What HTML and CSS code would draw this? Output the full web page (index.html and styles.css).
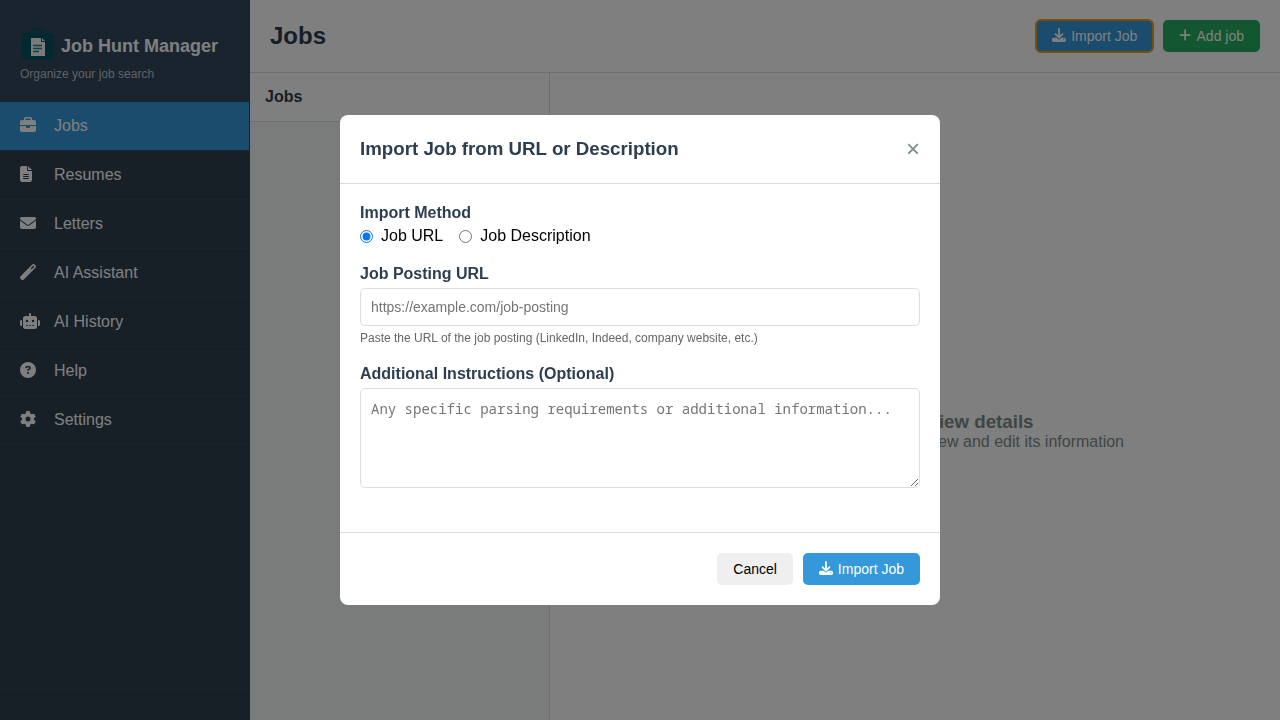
FILE: index.html
```html
<!DOCTYPE html>
<html lang="en">
<head>
<meta charset="utf-8">
<title>Job Hunt Manager</title>
<link rel="stylesheet" href="styles.css">
</head>
<body>
<svg class="sprite" aria-hidden="true">
  <symbol id="download" viewBox="0 0 512 512"><path d="M288 32c0-17.700-14.300-32-32-32s-32 14.300-32 32V274.700l-73.400-73.400c-12.500-12.500-32.800-12.500-45.300 0s-12.500 32.800 0 45.300l128 128c12.500 12.500 32.800 12.500 45.300 0l128-128c12.500-12.500 12.500-32.800 0-45.300s-32.800-12.500-45.300 0L288 274.700V32zM64 352c-35.300 0-64 28.700-64 64v32c0 35.300 28.700 64 64 64H448c35.300 0 64-28.700 64-64V416c0-35.300-28.700-64-64-64H346.500l-45.300 45.300c-25 25-65.500 25-90.500 0L165.500 352H64zm368 56a24 24 0 1 1 0 48 24 24 0 1 1 0-48z"/></symbol>
  <symbol id="briefcase" viewBox="0 0 512 512"><path d="M184 48H328c4.400 0 8 3.600 8 8V96H176V56c0-4.400 3.600-8 8-8zm-56 8V96H64C28.700 96 0 124.700 0 160v96H192 320 512V160c0-35.300-28.700-64-64-64H384V56c0-30.900-25.100-56-56-56H184c-30.900 0-56 25.100-56 56zM512 288H320v32c0 17.700-14.300 32-32 32H224c-17.700 0-32-14.300-32-32V288H0V416c0 35.300 28.700 64 64 64H448c35.300 0 64-28.700 64-64V288z"/></symbol>
</svg>
<div class="app">
  <aside class="sidebar">
    <header class="brand">
      <div class="brand-row">
        <svg class="logo" viewBox="0 0 36 36" aria-hidden="true">
          <path d="M12 7V4.500Q12 2 14 2H22Q24 2 24 4.500V7" fill="none" stroke="#005363" stroke-width="2"/>
          <path d="M5 6H31Q34 6 34 10V15Q34 18 36 19Q34 20 34 23V29Q34 33 30 33H6Q2 33 2 29V23Q2 20 0 19Q2 18 2 15V10Q2 6 5 6Z" fill="#005363"/>
          <path d="M9 8.500H7Q5 8.500 5 11V28Q5 30 7 30H9M27 8.500L31 12V28Q31 30 29 30H27" fill="none" stroke="#23485a" stroke-width="1"/>
          <path d="M11 11H21L25 15V29H11Z" fill="#f5f7f7"/>
          <path d="M21 10V15H26Z" fill="#005363"/><path d="M22 11V14H25Z" fill="#f5f7f7"/>
          <path d="M13 18.500H22M13 21.500H22M13 24.500H19" stroke="#168b94" stroke-width="1.500"/>
        </svg>
        <h1>Job Hunt Manager</h1>
      </div>
      <p>Organize your job search</p>
    </header>
    <nav class="nav">
      <a class="nav-item active" href="#"><span class="nav-icon"><svg viewBox="0 0 512 512"><use href="#briefcase"/></svg></span>Jobs</a>
      <a class="nav-item" href="#"><span class="nav-icon"><svg viewBox="0 0 384 512"><path d="M64 0C28.700 0 0 28.700 0 64V448c0 35.300 28.700 64 64 64H320c35.300 0 64-28.700 64-64V160H256c-17.700 0-32-14.300-32-32V0H64zM256 0V128H384L256 0zM112 256H272c8.800 0 16 7.200 16 16s-7.200 16-16 16H112c-8.800 0-16-7.200-16-16s7.200-16 16-16zm0 64H272c8.800 0 16 7.200 16 16s-7.200 16-16 16H112c-8.800 0-16-7.200-16-16s7.200-16 16-16zm0 64H272c8.800 0 16 7.200 16 16s-7.200 16-16 16H112c-8.800 0-16-7.200-16-16s7.200-16 16-16z"/></svg></span>Resumes</a>
      <a class="nav-item" href="#"><span class="nav-icon"><svg viewBox="0 0 512 512"><path d="M48 64C21.500 64 0 85.500 0 112c0 15.100 7.100 29.300 19.200 38.400L236.800 313.600c11.400 8.500 27 8.500 38.400 0L492.800 150.400c12.100-9.100 19.200-23.300 19.200-38.400c0-26.500-21.500-48-48-48H48zM0 176V384c0 35.300 28.700 64 64 64H448c35.300 0 64-28.700 64-64V176L294.400 339.200c-22.800 17.100-54 17.100-76.800 0L0 176z"/></svg></span>Letters</a>
      <a class="nav-item" href="#"><span class="nav-icon"><svg viewBox="0 0 16 16"><path fill-rule="evenodd" d="M.600 12.200L12.200.600Q13.500-.500 14.800.600L15.400 1.200Q16.500 2.500 15.400 3.800L3.800 15.400Q2.500 16.500 1.200 15.400L.600 14.800Q-.500 13.500.600 12.200ZM10.600 4.400L11.600 5.400L14.500 2.500L13.500 1.500Z"/></svg></span>AI Assistant</a>
      <a class="nav-item" href="#"><span class="nav-icon"><svg viewBox="0 0 640 512"><path d="M320 0c17.700 0 32 14.300 32 32V96H472c39.800 0 72 32.200 72 72V440c0 39.800-32.200 72-72 72H168c-39.800 0-72-32.200-72-72V168c0-39.800 32.200-72 72-72H288V32c0-17.700 14.300-32 32-32zM208 384c-8.800 0-16 7.200-16 16s7.200 16 16 16h32c8.800 0 16-7.200 16-16s-7.200-16-16-16H208zm96 0c-8.800 0-16 7.200-16 16s7.200 16 16 16h32c8.800 0 16-7.200 16-16s-7.200-16-16-16H304zm96 0c-8.800 0-16 7.200-16 16s7.200 16 16 16h32c8.800 0 16-7.200 16-16s-7.200-16-16-16H400zM264 256a40 40 0 1 0 -80 0 40 40 0 1 0 80 0zm152 40a40 40 0 1 0 0-80 40 40 0 1 0 0 80zM48 224H64V416H48c-26.500 0-48-21.500-48-48V272c0-26.500 21.500-48 48-48zm544 0c26.500 0 48 21.500 48 48v96c0 26.500-21.500 48-48 48H576V224h16z"/></svg></span>AI History</a>
      <a class="nav-item" href="#"><span class="nav-icon"><svg viewBox="0 0 512 512"><path d="M256 512A256 256 0 1 0 256 0a256 256 0 1 0 0 512zM169.800 165.300c7.900-22.300 29.100-37.300 52.800-37.300h58.300c34.900 0 63.100 28.300 63.100 63.100c0 22.600-12.100 43.500-31.700 54.800L280 264.400c-.2 13-10.900 23.600-24 23.600c-13.300 0-24-10.700-24-24V250.500c0-8.600 4.600-16.500 12.100-20.800l44.300-25.400c4.700-2.700 7.600-7.700 7.600-13.100c0-8.400-6.800-15.100-15.100-15.100H222.600c-3.400 0-6.400 2.100-7.500 5.300l-.4 1.200c-4.400 12.500-18.200 19-30.600 14.600s-19-18.200-14.600-30.600l.4-1.200zM224 352a32 32 0 1 1 64 0 32 32 0 1 1 -64 0z"/></svg></span>Help</a>
      <a class="nav-item" href="#"><span class="nav-icon"><svg viewBox="0 0 512 512"><path d="M495.900 166.600c3.200 8.700 .5 18.400-6.400 24.600l-43.300 39.400c1.100 8.300 1.700 16.800 1.700 25.400s-.6 17.100-1.700 25.400l43.300 39.400c6.900 6.200 9.600 15.900 6.400 24.600c-4.400 11.900-9.700 23.300-15.800 34.300l-4.700 8.100c-6.600 11-14 21.400-22.100 31.200c-5.900 7.200-15.700 9.600-24.500 6.800l-55.700-17.700c-13.400 10.300-28.200 18.900-44 25.400l-12.500 57.100c-2 9.100-9 16.300-18.200 17.800c-13.800 2.300-28 3.500-42.500 3.500s-28.700-1.200-42.500-3.500c-9.200-1.500-16.200-8.700-18.200-17.800l-12.500-57.100c-15.800-6.500-30.600-15.100-44-25.400L83.100 425.900c-8.800 2.800-18.600 .3-24.500-6.800c-8.100-9.800-15.500-20.200-22.100-31.200l-4.700-8.100c-6.100-11-11.400-22.400-15.800-34.300c-3.200-8.700-.5-18.400 6.400-24.600l43.300-39.400C64.600 273.100 64 264.600 64 256s.6-17.100 1.700-25.400L22.400 191.200c-6.900-6.200-9.600-15.900-6.400-24.600c4.400-11.900 9.700-23.300 15.800-34.300l4.700-8.100c6.600-11 14-21.400 22.100-31.200c5.900-7.200 15.700-9.600 24.500-6.800l55.700 17.700c13.400-10.300 28.200-18.900 44-25.400l12.500-57.100c2-9.100 9-16.300 18.200-17.800C227.300 1.200 241.500 0 256 0s28.700 1.200 42.500 3.500c9.200 1.500 16.200 8.700 18.200 17.800l12.500 57.100c15.800 6.500 30.600 15.100 44 25.400l55.700-17.700c8.800-2.800 18.600-.3 24.500 6.800c8.100 9.800 15.500 20.200 22.100 31.200l4.700 8.100c6.100 11 11.400 22.400 15.800 34.300zM256 336a80 80 0 1 0 0-160 80 80 0 1 0 0 160z"/></svg></span>Settings</a>
    </nav>
    <footer class="sidebar-footer"></footer>
  </aside>
  <main class="main">
    <header class="topbar">
      <h2>Jobs</h2>
      <div class="actions">
        <button class="btn btn-primary highlighted" type="button"><svg viewBox="0 0 512 512"><use href="#download"/></svg>Import Job</button>
        <button class="btn btn-success" type="button"><svg viewBox="0 0 448 512"><path d="M256 80c0-17.700-14.300-32-32-32s-32 14.300-32 32V224H48c-17.700 0-32 14.300-32 32s14.300 32 32 32H192V432c0 17.700 14.300 32 32 32s32-14.300 32-32V288H400c17.700 0 32-14.300 32-32s-14.300-32-32-32H256V80z"/></svg>Add job</button>
      </div>
    </header>
    <div class="content">
      <section class="list">
        <h3>Jobs</h3>
      </section>
      <section class="detail">
        <svg viewBox="0 0 512 512" aria-hidden="true"><use href="#briefcase"/></svg>
        <h3>Select a job to view details</h3>
        <p>Choose any job from the list to view and edit its information</p>
      </section>
    </div>
  </main>
</div>
<div class="overlay">
  <form class="modal" role="dialog" aria-labelledby="modal-title">
    <header class="modal-header">
      <h3 id="modal-title">Import Job from URL or Description</h3>
      <button class="close" type="button" aria-label="Close">×</button>
    </header>
    <div class="modal-body">
      <fieldset class="group">
        <legend class="label">Import Method</legend>
        <div class="radios">
          <label><input type="radio" name="method" checked>Job URL</label>
          <label><input type="radio" name="method">Job Description</label>
        </div>
      </fieldset>
      <div class="group">
        <label class="label" for="url">Job Posting URL</label>
        <input class="field" id="url" type="url" placeholder="https://example.com/job-posting">
        <small>Paste the URL of the job posting (LinkedIn, Indeed, company website, etc.)</small>
      </div>
      <div class="group">
        <label class="label" for="notes">Additional Instructions (Optional)</label>
        <textarea class="field notes" id="notes" placeholder="Any specific parsing requirements or additional information..."></textarea>
      </div>
    </div>
    <footer class="modal-footer">
      <button class="btn" type="button">Cancel</button>
      <button class="btn btn-primary" type="submit"><svg viewBox="0 0 512 512"><use href="#download"/></svg>Import Job</button>
    </footer>
  </form>
</div>
</body>
</html>
```
FILE: styles.css
```css
* { box-sizing: border-box; margin: 0; padding: 0; }
body { font-family: "Liberation Sans", Arial, sans-serif; font-size: 16px; color: #000; }
svg { fill: currentColor; flex: none; }
.sprite { display: none; }

.app { display: flex; height: 100vh; }
.sidebar { width: 250px; flex: none; display: flex; flex-direction: column; background: #2f3e4f; border-right: 1px solid #34495e; color: #fff; }
.brand { padding: 27px 20px 20px; background: #34495e; border-bottom: 1px solid #34495e; }
.brand-row { display: flex; align-items: center; gap: 5px; margin-bottom: 4px; }
.logo { width: 36px; height: 36px; }
.brand h1 { font-size: 18px; line-height: 22px; padding-top: 2px; }
.brand p { font-size: 12px; line-height: 14px; color: #bdc3c7; }
.nav { flex: 1; }
.nav-item { display: flex; align-items: center; gap: 14px; padding: 15px 20px; line-height: 18px; border-bottom: 1px solid #34495e; color: #fff; text-decoration: none; }
.nav-item.active { background: #3498db; }
.nav-icon { width: 20px; display: flex; }
.nav-icon svg { height: 16px; margin-bottom: 2px; }
.sidebar-footer { height: 31px; border-top: 1px solid #34495e; }

.main { flex: 1; min-width: 0; display: flex; flex-direction: column; background: #fff; }
.topbar { display: flex; align-items: center; justify-content: space-between; padding: 20px; min-height: 73px; border-bottom: 1px solid #ddd; }
.topbar h2 { font-size: 24px; color: #2c3e50; }
.actions { display: flex; gap: 10px; }
.btn { display: flex; align-items: center; gap: 5px; height: 32px; padding: 0 16px; border: 0; border-radius: 5px; background: #efefef; color: #000; font-family: inherit; font-size: 14px; }
.btn svg { height: 14px; margin-bottom: 2px; }
.btn-primary { background: #3498db; color: #fff; }
.btn-success { background: #27ae60; color: #fff; }
.highlighted { outline: 2px solid #f39c12; outline-offset: -1px; }
.content { flex: 1; display: flex; }
.list { width: 300px; flex: none; background: #f5f8f7; border-right: 1px solid #ddd; }
.list h3 { padding: 15px; font-size: 16px; line-height: 18px; color: #2c3e50; background: #fff; border-bottom: 1px solid #ddd; }
.detail { flex: 1; display: flex; flex-direction: column; align-items: center; justify-content: center; color: #7f8c8d; }
.detail svg { height: 48px; margin-bottom: 20px; }

.overlay { position: fixed; inset: 0; display: flex; align-items: center; justify-content: center; background: rgba(0, 0, 0, 0.5); }
.modal { width: 90%; max-width: 600px; background: #fff; border-radius: 8px; }
.modal-header { display: flex; align-items: center; justify-content: space-between; padding: 20px; border-bottom: 1px solid #ddd; }
.modal-header h3 { color: #2c3e50; }
.close { border: 0; background: none; font-family: inherit; font-size: 24px; line-height: 28px; color: #7f8c8d; }
.modal-body { padding: 20px 20px 24px; }
.group { border: 0; margin-bottom: 20px; }
.label { display: block; margin-bottom: 5px; line-height: 18px; font-weight: bold; color: #2c3e50; }
.radios { display: flex; gap: 16px; line-height: 18px; }
.radios label { display: flex; align-items: center; gap: 8px; }
.field { display: block; width: 100%; padding: 10px; border: 1px solid #ddd; border-radius: 5px; background: #fff; font-family: inherit; font-size: 14px; }
.notes { height: 100px; font-family: "Noto Sans Mono", monospace; resize: vertical; }
.group small { display: block; margin-top: 5px; font-size: 12px; line-height: 14px; color: #666; }
.modal-footer { display: flex; justify-content: flex-end; gap: 10px; padding: 20px; border-top: 1px solid #ddd; }
```
